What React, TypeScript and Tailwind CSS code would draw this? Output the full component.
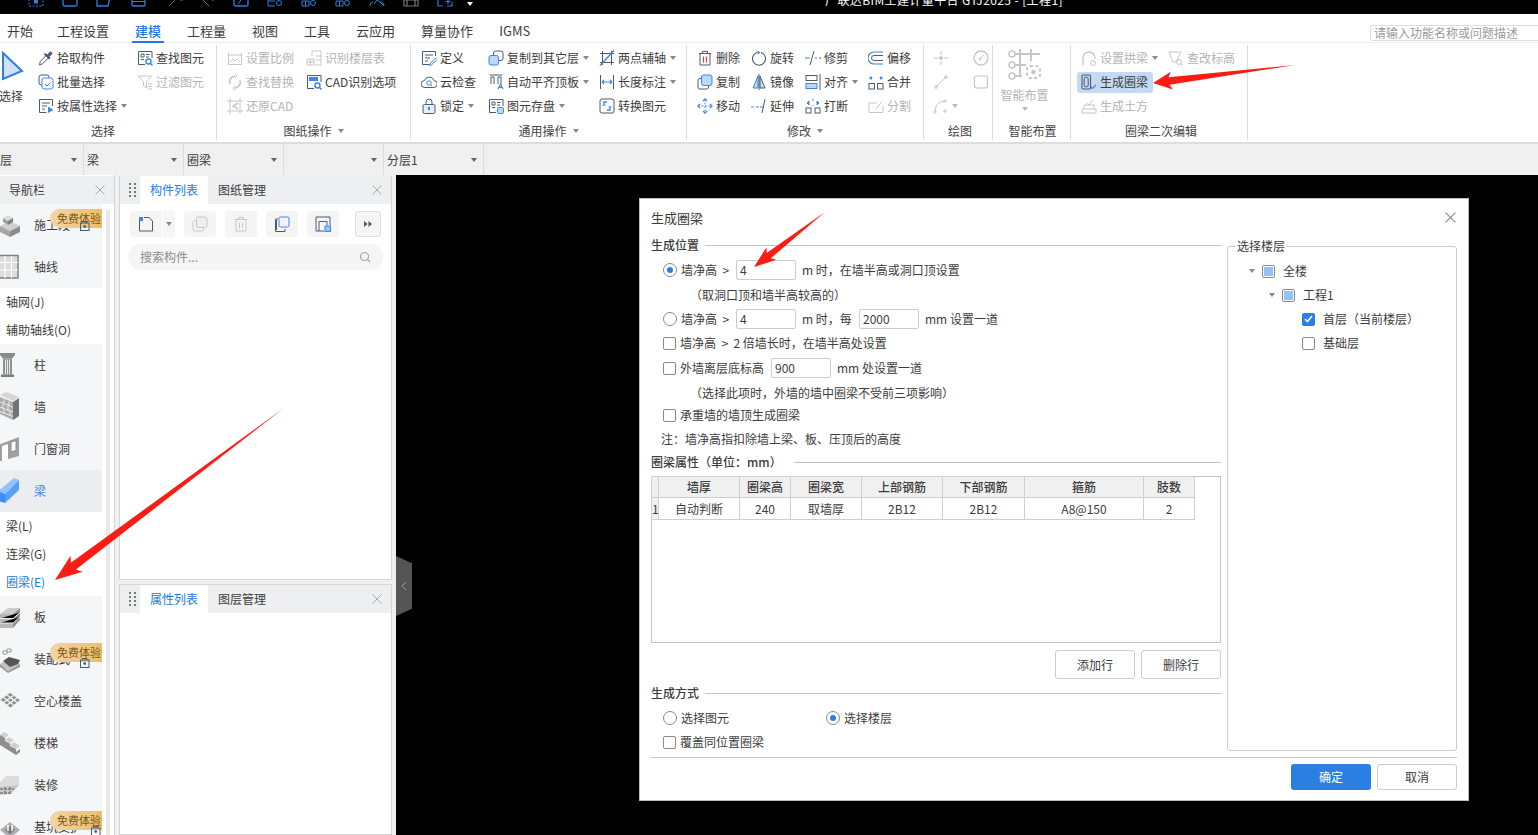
import type { ReactNode } from 'react';

const D = '#4a5b72';
const B = '#3d86e6';
const G = '#c6c6c6';

function Svg({ c = D, s = 16, v = 16, children }: { c?: string; s?: number; v?: number; children: ReactNode }) {
  return (
    <svg width={s} height={s} viewBox={`0 0 ${v} ${v}`} fill="none" stroke={c} strokeWidth="1" className="shrink-0">
      {children}
    </svg>
  );
}

function Caret({ c = 'border-t-[#888]' }: { c?: string }) {
  return <span className={`inline-block w-0 h-0 border-x-[3px] border-x-transparent border-t-[4px] ${c}`} />;
}

const icons: Record<string, ReactNode> = {
  pick: <Svg><path d="M1.500 15l.8-3.500L8 5.500l2.500 2.500-6 5.800z" fill="#fff" /><path d="M8 4l1.500 1L12 2.200c1-.8 2.600.8 1.800 1.800L11 6.500l1 1.500-1 1-5-5z" fill={D} /></Svg>,
  batch: <Svg><rect x="1" y="1" width="10" height="10" rx="2" /><rect x="4" y="4" width="11" height="11" rx="2.500" fill="#fff" stroke={B} /><path d="M7 10l2 2 3.500-3.500" stroke={B} /></Svg>,
  attr: <Svg><path d="M14.500 8V1.500h-13v13h7" /><path d="M4 5h8M4 8h5M4 11h3" /><path d="M10 8.500l5.500 3.500-5.500 3z" fill={B} stroke="none" /></Svg>,
  find: <Svg><path d="M15 8V1.500H1.500v13H8" /><path d="M4 4h3v3H4zM4 9.500h3M9 4.500h3.500M9 7h3" /><circle cx="11.500" cy="11.500" r="2.500" stroke={B} strokeWidth="1.400" /><path d="M13.500 13.500l2 2" stroke={B} strokeWidth="1.400" /></Svg>,
  filter: <Svg c={G}><path d="M1.500 2h13l-5 6v6l-3-2V8z" /><path d="M11 10h4M11 12.500h4M11 15h4" /></Svg>,
  scale: <Svg c={G}><path d="M1.500 3v2h13V3M1.500 14.500V5M14.500 14.500V5M1.500 14.500h13" /><path d="M3 12l3-3 2 2 2-2 3 3" /></Svg>,
  replace: <Svg c={G}><path d="M3 10A6 6 0 0 1 8 2M13 6a6 6 0 0 1-5 8" strokeWidth="1.600" /><path d="M8 0l2 2-2 2M8 12l-2 2 2 2" /></Svg>,
  restore: <Svg c={G}><path d="M3 0v16M0 3h16M13 0v16M0 13h16" /><path d="M11 5L6 8l5 3" strokeWidth="1.500" /></Svg>,
  floor: <Svg c={G}><path d="M6 1h9v14H9M6 1v5M10 6h5M10 10h5" /><path d="M1 15V9h7v6zM1 12h7M4.500 9v6" /></Svg>,
  cad: <Svg><path d="M15 8V1.500H1.500v13H8" /><rect x="3" y="3" width="9" height="4" fill={B} stroke="none" /><circle cx="11.500" cy="11.500" r="2.500" stroke={B} strokeWidth="1.400" /><path d="M13.500 13.500l2 2" stroke={B} strokeWidth="1.400" /></Svg>,
  define: <Svg><path d="M14.500 6V1.500h-13v13h7" /><path d="M4 5h8M4 8h5M4 11h3" /><path d="M9 14l5.500-6 1.500 1.500L10.500 15l-2 .5z" stroke={B} /></Svg>,
  cloud: <Svg><path d="M4 13.500a3.500 3.500 0 0 1-.5-7 5 5 0 0 1 9.500 0 3.500 3.500 0 0 1-.5 7z" /><circle cx="8" cy="9" r="2.200" stroke={B} /><path d="M9.500 10.500l1.500 1.500" stroke={B} /></Svg>,
  lock: <Svg><rect x="2" y="6.500" width="12" height="9" rx="1.500" fill="#e4eefc" /><path d="M5 6.500V4a3 3 0 0 1 6 0v2.500" /><path d="M8 9v3" stroke={B} strokeWidth="2" /></Svg>,
  copyFloor: <Svg><rect x="5.500" y="1" width="9.500" height="9.500" rx="2" /><rect x="1" y="5.500" width="9.500" height="9.500" rx="2" fill="#bcd7f9" stroke={B} /></Svg>,
  align: <Svg><path d="M1.500 1h13M3 10V3h3v7M10 10V3h3v7" /><path d="M10 15l2.500-5 2.500 5M11 13.500h3" stroke={B} strokeWidth="1.200" /></Svg>,
  save: <Svg><path d="M15 8V1.500H1.500v13H8" /><path d="M4 4h3v3H4zM4 9.500h3M9 4.500h3.500M9 7h3" /><rect x="9.500" y="9.500" width="6" height="6" rx="1" fill="#bcd7f9" stroke={B} /></Svg>,
  axis: <Svg c={B}><path d="M1 3.500h14M1 12.500h14M3.500 1v14M12.500 1v14" stroke={D} /><path d="M1 15.500L15 .5" strokeWidth="1.400" /></Svg>,
  dim: <Svg><path d="M1.500 1v14M14.500 1v14" /><path d="M3 8h10M3 8l2-2M3 8l2 2M13 8l-2-2M13 8l-2 2" stroke={B} strokeWidth="1.200" /></Svg>,
  convert: <Svg><rect x="1" y="1" width="14" height="14" rx="2" /><path d="M5 7V4h3M8 12h3V9" stroke={B} strokeWidth="1.300" /><path d="M3.500 8L5 6.500 6.500 8M9.500 8l1.500 1.500L12.500 8" stroke={B} /></Svg>,
  del: <Svg><path d="M2 3.500h12M5.500 3.500V1.500h5v2M3 3.500v11.500h10V3.500" /><path d="M6.500 6.500v6M9.500 6.500v6" stroke="#d9423a" strokeWidth="1.200" /></Svg>,
  copy: <Svg><rect x="1" y="4.500" width="10.500" height="10.500" rx="2" /><rect x="4.500" y="1" width="10.500" height="10.500" rx="2" fill="#bcd7f9" stroke={B} /></Svg>,
  move: <Svg c={B}><path d="M8 1v14M1 8h14" strokeDasharray="2 1.500" /><path d="M6 3l2-2 2 2M6 13l2 2 2-2M3 6L1 8l2 2M13 6l2 2-2 2" strokeWidth="1.300" /></Svg>,
  rotate: <Svg><path d="M10 2.500a6.500 6.500 0 1 1-4 0" strokeWidth="1.100" /><path d="M6.500 .5l3 2-3 2z" fill={B} stroke="none" /></Svg>,
  mirror: <Svg><path d="M7 2L2 14h5z" fill="#bcd7f9" stroke={B} /><path d="M9 2l5 12H9z" fill="#d5dbe3" /><path d="M8 0v16" /></Svg>,
  extend: <Svg><path d="M0 9h3M5 9h3" stroke={B} /><path d="M9 9h4" stroke={B} /><path d="M11 15L14 1" /></Svg>,
  trim: <Svg><path d="M0 8h5" stroke={B} /><path d="M10 8h2M14 8h2" /><path d="M5 15L9 1" /></Svg>,
  alignTo: <Svg><rect x="1" y="1.500" width="11" height="5" /><rect x="1" y="9.500" width="11" height="5" fill="#bcd7f9" stroke={B} /><path d="M15 0v16" /></Svg>,
  cut: <Svg><rect x="1" y="10" width="5" height="5" /><rect x="10" y="10" width="5" height="5" /><path d="M2 5l2-2v4zM14 5l-2-2v4z" fill={B} stroke={B} /><path d="M8 7v1M8 1v2" stroke={B} /></Svg>,
  offset: <Svg c={B}><path d="M15 2H6a6 6 0 0 0 0 12h9" strokeWidth="1.200" /><path d="M15 5.500H6a2.500 2.500 0 0 0 0 5h9" stroke={D} /></Svg>,
  merge: <Svg><rect x="1" y="9.500" width="5.500" height="5.500" /><rect x="9.500" y="9.500" width="5.500" height="5.500" /><path d="M1 4h3M4 4L2.500 2.500M4 4L2.500 5.500M15 4h-3M12 4l1.500-1.500M12 4l1.500 1.500" stroke={B} strokeWidth="1.200" /></Svg>,
  split: <Svg c={G}><path d="M15 8v6.500H1V5h8" /><path d="M8 11l6-7.500" /></Svg>,
  p1: <Svg c={G}><path d="M8 1v4M8 11v4M1 8h4M11 8h4" /><circle cx="8" cy="8" r="1.500" fill={G} /></Svg>,
  p2: <Svg c={G}><circle cx="8" cy="8" r="7" strokeWidth="1.300" /><path d="M7 9l4-4" /><circle cx="7" cy="9" r="1" /></Svg>,
  p3: <Svg c={G}><path d="M3 13L13 3" /><circle cx="3" cy="13" r="1.300" /><circle cx="13" cy="3" r="1.300" /></Svg>,
  p4: <Svg c={G}><rect x="1.500" y="2" width="13" height="12" rx="2" strokeWidth="1.200" /></Svg>,
  p5: <Svg c={G}><path d="M2 14A10 10 0 0 1 11 3" /><circle cx="2" cy="14" r="1.200" /><circle cx="12" cy="3" r="1.200" /><circle cx="12" cy="13" r="1.200" /></Svg>,
  arch: <Svg c={G}><path d="M2 15V8a6 6 0 0 1 12 0v1" strokeWidth="1.300" /><circle cx="12" cy="13" r="2.500" /></Svg>,
  elev: <Svg c={G}><path d="M1 2h12L8 12H5z" /><circle cx="11" cy="12" r="2.500" /><path d="M13 14l2 1.500" /></Svg>,
  ring: <Svg><rect x="1" y="1" width="8.500" height="14" rx="1" strokeWidth="1.100" /><rect x="3.200" y="3" width="4" height="10" rx="2" /><path d="M10 13l1.500 1.500L15 11" stroke={B} strokeWidth="1.200" /></Svg>,
  earth: <Svg c={G}><path d="M1 11h14v4H1zM3 11V7h10v4" /><path d="M6 5l2 2 4-5" /></Svg>,
};

function Item({ icon, label, off, caret, className = '' }: { icon: string; label: string; off?: boolean; caret?: boolean; className?: string }) {
  return (
    <div className={`flex items-center h-[24px] whitespace-nowrap ${off ? 'text-[#b4b4b4]' : 'text-[#3c3c3c]'} ${className}`}>
      {icons[icon]}
      <span className="ml-[3px]">{label}</span>
      {caret && <span className="ml-[4px] flex"><Caret /></span>}
    </div>
  );
}

function Group({ label, caret, w, pl, labelClass = '', children }: { label: string; caret?: boolean; w: string; pl: string; labelClass?: string; children: ReactNode }) {
  return (
    <div className={`${w} shrink-0 h-[95px] mt-[2px] border-r border-[#dcdcdc] flex flex-col`}>
      <div className={`flex h-[73px] pt-[1px] ${pl}`}>{children}</div>
      <div className={`flex items-center justify-center gap-[6px] pt-[4px] text-[#444] ${labelClass}`}>
        {label}
        {caret && <Caret />}
      </div>
    </div>
  );
}

const tabs = ['开始', '工程设置', '建模', '工程量', '视图', '工具', '云应用', '算量协作', 'IGMS'];

const topIcons: { m: string; c: string; node: ReactNode }[] = [
  { m: 'ml-[28px]', c: '#2f7fe0', node: <><path d="M1 1v14h14V1" strokeDasharray="2 1.500" /><rect x="6.500" y="8" width="3" height="4" fill="#2f7fe0" /></> },
  { m: 'ml-[18px]', c: '#2f7fe0', node: <rect x="1" y="1" width="14" height="14" rx="1.500" strokeWidth="1.300" /> },
  { m: 'ml-[18px]', c: '#2f7fe0', node: <path d="M1 1v14h11l3-14" strokeWidth="1.300" /> },
  { m: 'ml-[19px]', c: '#2f7fe0', node: <><rect x="1" y="1" width="13" height="14" rx="1" strokeWidth="1.300" /><path d="M1 10.500h13" /></> },
  { m: 'ml-[21px]', c: '#666', node: <path d="M1 15L11 5M12 9h3" /> },
  { m: 'ml-[14px]', c: '#666', node: <path d="M1 5l10 10M14 9h2" /> },
  { m: 'ml-[19px]', c: '#2f7fe0', node: <><rect x="1" y="1" width="14" height="14" rx="1.500" strokeWidth="1.300" /><path d="M5 13l5-7" /></> },
  { m: 'ml-[18px]', c: '#2f7fe0', node: <><path d="M1 1v14h7M1 10h7" /><circle cx="12" cy="12" r="2.500" /></> },
  { m: 'ml-[18px]', c: '#2f7fe0', node: <><path d="M1 10h7v5H1zM4.500 10v5" /><circle cx="12" cy="12" r="2.500" /></> },
  { m: 'ml-[18px]', c: '#2f7fe0', node: <><path d="M1 10h7v5H1zM4.500 10v5" /><circle cx="12" cy="12" r="2.500" /></> },
  { m: 'ml-[18px]', c: '#2f7fe0', node: <><path d="M1 15c0-3 2-4 3-4M11 11c2 0 4 1 4 4z" /><path d="M5 13l3-4 3 2" /></> },
  { m: 'ml-[18px]', c: '#777', node: <path d="M1 9h14v6H1zM4 9v6M12 9v6" strokeWidth="1.200" /> },
  { m: 'ml-[18px]', c: '#2f7fe0', node: <path d="M1 1v14h5M10 15h5v-4M11 8v5M8.500 10.500h5" strokeWidth="1.200" /> },
];

function TopBar() {
  return (
    <div className="h-[14px] bg-black flex overflow-hidden relative shrink-0">
      {topIcons.map((t, i) => (
        <div key={i} className={`${t.m} -mt-[9px] w-[16px] h-[16px] shrink-0`}>
          <Svg c={t.c}>{t.node}</Svg>
        </div>
      ))}
      <span className="ml-[14px] mt-[2px] w-0 h-0 border-x-[3px] border-x-transparent border-t-[4px] border-t-white" />
      <span className="absolute left-[825px] -top-[9px] text-white text-[12px] tracking-[0.4px] whitespace-nowrap">广联达BIM土建计量平台 GTJ2025 - [工程1]</span>
    </div>
  );
}

function MenuTabs() {
  return (
    <div className="h-[29px] shrink-0 flex border-b border-[#eeeeee] pl-[7px] text-[13px] gap-[26px] relative">
      {tabs.map((t, i) => (
        <div key={t} className={`relative pt-[7px] leading-[20px] ${i === 1 ? '-ml-[2px]' : ''} ${t === '建模' ? 'text-[#1b7ae8] font-medium' : 'text-[#3c3c3c]'}`}>
          {t}
          {t === '建模' && <span className="absolute -left-[3px] -right-[3px] top-[27px] h-[2px] bg-[#1b7ae8]" />}
        </div>
      ))}
      <div className="absolute left-[1370px] top-[11px] w-[180px] h-[16px] border border-[#dddddd] rounded-[2px] text-[12px] leading-[14px] pl-[3px] text-[#9a9a9a]">请输入功能名称或问题描述</div>
    </div>
  );
}

function Ribbon() {
  return (
    <div className="h-[101px] shrink-0 flex border-b-2 border-[#dddddd] text-[12px] bg-white">
      <Group label="选择" w="w-[217px]" pl="pl-0" labelClass="pr-[10px]">
        <div className="w-[38px] shrink-0 flex flex-col">
          <svg width="24" height="30" viewBox="0 0 24 30" className="ml-[1px] mt-[5px]">
            <path d="M2 2l19 18-19 8z" fill="#cfe2fb" stroke="#2f7fe0" strokeWidth="2" />
          </svg>
          <span className="mt-[6px] -ml-[1px] text-[#3c3c3c]">选择</span>
        </div>
        <div className="w-[99px] shrink-0">
          <Item icon="pick" label="拾取构件" />
          <Item icon="batch" label="批量选择" />
          <Item icon="attr" label="按属性选择" caret />
        </div>
        <div>
          <Item icon="find" label="查找图元" />
          <Item icon="filter" label="过滤图元" off />
        </div>
      </Group>
      <Group label="图纸操作" caret w="w-[194px]" pl="pl-[10px]">
        <div className="w-[79px] shrink-0">
          <Item icon="scale" label="设置比例" off />
          <Item icon="replace" label="查找替换" off />
          <Item icon="restore" label="还原CAD" off />
        </div>
        <div>
          <Item icon="floor" label="识别楼层表" off />
          <Item icon="cad" label="CAD识别选项" />
        </div>
      </Group>
      <Group label="通用操作" caret w="w-[276px]" pl="pl-[10px]">
        <div className="w-[67px] shrink-0">
          <Item icon="define" label="定义" />
          <Item icon="cloud" label="云检查" />
          <Item icon="lock" label="锁定" caret />
        </div>
        <div className="w-[111px] shrink-0">
          <Item icon="copyFloor" label="复制到其它层" caret />
          <Item icon="align" label="自动平齐顶板" caret />
          <Item icon="save" label="图元存盘" caret />
        </div>
        <div>
          <Item icon="axis" label="两点辅轴" caret />
          <Item icon="dim" label="长度标注" caret />
          <Item icon="convert" label="转换图元" />
        </div>
      </Group>
      <Group label="修改" caret w="w-[237px]" pl="pl-[10px]">
        <div className="w-[54px] shrink-0">
          <Item icon="del" label="删除" />
          <Item icon="copy" label="复制" />
          <Item icon="move" label="移动" />
        </div>
        <div className="w-[54px] shrink-0">
          <Item icon="rotate" label="旋转" />
          <Item icon="mirror" label="镜像" />
          <Item icon="extend" label="延伸" />
        </div>
        <div className="w-[63px] shrink-0">
          <Item icon="trim" label="修剪" />
          <Item icon="alignTo" label="对齐" caret />
          <Item icon="cut" label="打断" />
        </div>
        <div>
          <Item icon="offset" label="偏移" />
          <Item icon="merge" label="合并" />
          <Item icon="split" label="分割" off />
        </div>
      </Group>
      <Group label="绘图" w="w-[69px]" pl="pl-[9px]" labelClass="pl-[4px]">
        <div className="w-[40px] shrink-0">
          <Item icon="p1" label="" />
          <Item icon="p3" label="" />
          <div className="flex items-center gap-[3px] h-[24px]">{icons.p5}<Caret c="border-t-[#bbb]" /></div>
        </div>
        <div>
          <Item icon="p2" label="" />
          <Item icon="p4" label="" />
        </div>
      </Group>
      <Group label="智能布置" w="w-[78px]" pl="pl-0" labelClass="pl-[2px]">
        <div className="w-full flex flex-col items-center text-[#b4b4b4] pr-[14px]">
          <svg width="34" height="34" viewBox="0 0 34 34" fill="none" stroke="#c6c6c6" strokeWidth="1.500" className="mt-[2px]">
            <path d="M4 6h28M4 17h14M4 28h10M12 1v28M23 1v12" strokeWidth="2" />
            <circle cx="4" cy="6" r="3" fill="#fff" />
            <circle cx="4" cy="17" r="3" fill="#fff" />
            <circle cx="4" cy="28" r="3" fill="#fff" />
            <rect x="19" y="18" width="13" height="12" rx="3" strokeWidth="2" strokeDasharray="3 2.500" />
            <circle cx="25.500" cy="24" r="1.500" fill="#c6c6c6" />
          </svg>
          <span className="mt-[4px] whitespace-nowrap">智能布置</span>
          <span className="mt-[3px] flex"><Caret c="border-t-[#bbb]" /></span>
        </div>
      </Group>
      <Group label="圈梁二次编辑" w="w-[177px]" pl="pl-[10px]" labelClass="pl-[4px]">
        <div className="w-[87px] shrink-0">
          <Item icon="arch" label="设置拱梁" off caret />
          <Item icon="ring" label="生成圈梁" className="bg-[#c3daf2] rounded-[3px] -ml-[4px] pl-[4px] w-[76px] !h-[21px] my-[1.500px]" />
          <Item icon="earth" label="生成土方" off />
        </div>
        <div>
          <Item icon="elev" label="查改标高" off />
        </div>
      </Group>
    </div>
  );
}

function ComboBar() {
  const cells = [
    { t: '层', w: 'w-[84px]', pl: 'pl-0' },
    { t: '梁', w: 'w-[100px]', pl: 'pl-[3px]' },
    { t: '圈梁', w: 'w-[100px]', pl: 'pl-[3px]' },
    { t: '', w: 'w-[100px]', pl: 'pl-[3px]' },
    { t: '分层1', w: 'w-[100px]', pl: 'pl-[3px]' },
  ];
  return (
    <div className="h-[31px] shrink-0 flex bg-[#f0f0f0] text-[12px] text-[#3c3c3c]">
      {cells.map((c, i) => (
        <div key={i} className={`${c.w} ${c.pl} flex items-center justify-between pr-[6px] border-r border-[#dcdcdc]`}>
          <span>{c.t}</span>
          <Caret c="border-t-[#666]" />
        </div>
      ))}
    </div>
  );
}

function X({ c = '#a8a8a8', s = 10 }: { c?: string; s?: number }) {
  return (
    <svg width={s} height={s} viewBox="0 0 10 10" stroke={c} strokeWidth="1" className="shrink-0">
      <path d="M.5.5l9 9M9.500.5l-9 9" />
    </svg>
  );
}

// drawn around y=11, the middle of a nav row
const navIcons: Record<string, ReactNode> = {
  seg: <g><path d="M0 12l10-5 10 5-10 5z" fill="#cfcfcf" /><path d="M0 12l10 5v6l-10-5z" fill="#a6a6a6" /><path d="M20 12l-10 5v6l10-5z" fill="#8c8c8c" /><path d="M3 4l5-3 5 3-5 3z" fill="#dadada" /><path d="M3 4l5 3v4l-5-3z" fill="#9e9e9e" /><path d="M13 4l-5 3v4l5-3z" fill="#808080" /></g>,
  axis: <g><rect x="-2" y="-.5" width="20" height="22.500" fill="#dddddd" stroke="#808080" strokeWidth="1.500" /><path d="M5 0v22M11.500 0v22M-2 6.500h20M-2 14h20" stroke="#fff" strokeWidth="1.200" /></g>,
  col: <g><path d="M0-1h15v2l-3 3.500H3L0 1z" fill="#8a8a8a" /><rect x="3" y="4.500" width="9" height="16" fill="#8f8f8f" /><path d="M5.500 5.500v15M7.500 5.500v15M9.500 5.500v15" stroke="#ececec" /><path d="M1 20.500h13v2.500H1z" fill="#7a7a7a" /></g>,
  wall: <g><path d="M0-1l13 6 6-4-13-5z" fill="#d6d6d6" /><path d="M0 1l13 5v18L0 18z" fill="#ababab" /><path d="M13 6l6-4v18l-6 4z" fill="#737373" /><path d="M0 6l13 5M0 11l13 5M0 15.500l13 5M4 3v5M9 5v5M3 8v5M8 10v5M4 13v5M10 15v5" stroke="#e8e8e8" /></g>,
  door: <g><path d="M-2 7L19-1v19L8 21V23H-2z" fill="#a0a0a0" /><path d="M2 8l6-2v17H2z" fill="#fff" /><path d="M11 4l5-1.500v10L11 14z" fill="#fff" stroke="#8a8a8a" /></g>,
  beam: <g><path d="M-2 11L14-2l5 2L5 14z" fill="#93c3ff" /><path d="M5 14L19 0v10L5 23z" fill="#5a9ff7" /><path d="M-2 11l7 3v9l-7-2z" fill="#3e8bf5" /></g>,
  slab: <g><path d="M0 8h13l7-6H8z" fill="#cccccc" /><path d="M0 8h13v14H0z" fill="#b8b8b8" /><path d="M13 8l7-6v12l-7 8z" fill="#8f8f8f" /><path d="M0 12.500h13l7-6M0 17h13l7-6" stroke="#efefef" /></g>,
  fab: <g><path d="M0 16l8-5 12 5-12 7z" fill="#c2c2c2" /><path d="M8 23l12-7v3L8 25zM0 16l8 7v2l-8-6z" fill="#999" /><path d="M3 13l6-4 11 3-2 4-8 3z" fill="#555" /><path d="M3 3h4v3H3zM7 1h4v3H7z" fill="#fff" stroke="#999" /></g>,
  hollow: <g><path d="M0 10l10-7 10 7-10 8z" fill="#8e8e8e" /><path d="M3.500 7.500l10 7.500M7 5l10 7.500M13.500 5.500L3 13M17 8L6.500 15.500M0 10l10 8" stroke="#f5f6f8" strokeWidth="1.300" /></g>,
  stair: <g><path d="M0 3l4-3 5 3-4 3zM5 8l4-3 5 3-4 3zM10 13l4-3 6 4-4 3z" fill="#d0d0d0" /><path d="M0 3l5 3v3l5 2.500V14l6 3v3l4-3v3l-4 3L0 13z" fill="#8f8f8f" /></g>,
  deco: <g><path d="M0 8l6-6h13v9L10 16H0z" fill="#dcdcdc" /><path d="M0 13l10-1 9-1-8 9-11 1z" fill="#c8c8c8" /><path d="M0 15h14M0 19h10M5 13v7M10 13v7" stroke="#7f7f7f" strokeWidth="1.500" strokeDasharray="3 1" /></g>,
  pit: <g><path d="M0 14l10-8 10 8-10 8z" fill="#b0b0b0" /><path d="M5 14l5-4 5 4-5 4z" fill="#777" /><path d="M8 9v6M12 9v6" stroke="#fff" strokeWidth="1.500" /></g>,
};

function Lock({ className }: { className: string }) {
  return (
    <svg width="10" height="11" viewBox="0 0 10 11" fill="none" stroke="#4a5b72" className={`absolute ${className}`}>
      <rect x=".5" y="3" width="8.500" height="7.500" />
      <path d="M2.500 3V1.500h4.500V3" />
      <circle cx="4.700" cy="6.500" r="1" fill="#4a5b72" />
    </svg>
  );
}

function NavRow({ icon, label, badge, active, lockClass }: { icon: string; label: string; badge?: boolean; active?: boolean; lockClass?: string }) {
  return (
    <div className={`relative h-[42px] flex items-center ${active ? 'bg-[#ecedf1]' : 'bg-[#f5f6f8]'}`}>
      <svg width="22" height="30" viewBox="-2 -4 22 30" className="shrink-0 -ml-[2px]">
        {navIcons[icon]}
      </svg>
      <span className={`ml-[14px] whitespace-nowrap ${active ? 'text-[#3d86e6]' : 'text-[#3c3c3c]'}`}>{label}</span>
      {badge && (
        <>
          <span className="absolute right-0 top-[5px] w-[52px] h-[19px] rounded-l-full bg-gradient-to-r from-[#f3d5a3] to-[#edbd68] text-[#7c5516] text-[11px] leading-[19px] pl-[7px] whitespace-nowrap overflow-hidden">免费体验</span>
          <Lock className={lockClass ?? 'left-[80px] top-[16px]'} />
        </>
      )}
    </div>
  );
}

function SubRow({ label, active }: { label: string; active?: boolean }) {
  return <div className={`h-[28px] pl-[6px] flex items-center bg-white ${active ? 'text-[#1b7ae8]' : 'text-[#3c3c3c]'}`}>{label}</div>;
}

function NavPanel() {
  return (
    <div className="w-[115px] shrink-0 h-full border-r border-[#d5d5d5] bg-white flex flex-col text-[12px] overflow-hidden">
      <div className="h-[28px] mt-[1px] shrink-0 bg-[#eeeff1] flex items-center justify-between pl-[9px] pr-[9px] text-[#3c3c3c]">
        导航栏
        <X />
      </div>
      <div className="flex flex-1 min-h-0">
        <div className="w-[102px] shrink-0">
          <NavRow icon="seg" label="施工段" badge />
          <NavRow icon="axis" label="轴线" />
          <SubRow label="轴网(J)" />
          <SubRow label="辅助轴线(O)" />
          <NavRow icon="col" label="柱" />
          <NavRow icon="wall" label="墙" />
          <NavRow icon="door" label="门窗洞" />
          <NavRow icon="beam" label="梁" active />
          <SubRow label="梁(L)" />
          <SubRow label="连梁(G)" />
          <SubRow label="圈梁(E)" active />
          <NavRow icon="slab" label="板" />
          <NavRow icon="fab" label="装配式" badge lockClass="left-[80px] top-[19px]" />
          <NavRow icon="hollow" label="空心楼盖" />
          <NavRow icon="stair" label="楼梯" />
          <NavRow icon="deco" label="装修" />
          <NavRow icon="pit" label="基坑支护" badge lockClass="left-[91px] top-[19px]" />
        </div>
        <div className="w-[4px] ml-[4px] mt-[6px] bg-[#e8e8e8]" />
      </div>
    </div>
  );
}

function PanelHeader({ tabs: t }: { tabs: [string, string] }) {
  return (
    <div className="h-[28px] shrink-0 bg-[#eeeff1] flex items-center text-[12px]">
      <div className="w-[20px] flex justify-center pl-[4px]">
        <div className="grid grid-cols-2 gap-x-[3px] gap-y-[2px]">
          {[0, 1, 2, 3, 4, 5, 6, 7].map((i) => (
            <span key={i} className="w-[2px] h-[2px] bg-[#777]" />
          ))}
        </div>
      </div>
      <div className="w-[68px] h-full bg-white text-[#1b7ae8] flex items-center justify-center">{t[0]}</div>
      <div className="ml-[10px] text-[#3c3c3c]">{t[1]}</div>
      <div className="ml-auto mr-[9px]"><X /></div>
    </div>
  );
}

function ToolBtn({ className = '', children }: { className?: string; children: ReactNode }) {
  return <div className={`h-[26px] bg-[#f5f5f5] rounded-[3px] flex items-center justify-center shrink-0 ${className}`}>{children}</div>;
}

function ListPanel() {
  return (
    <div className="h-[404px] shrink-0 border border-t-0 border-[#d5d5d5] bg-white flex flex-col">
      <PanelHeader tabs={['构件列表', '图纸管理']} />
      <div className="flex items-center pl-[10px] mt-[7px]">
        <ToolBtn className="w-[32px] rounded-r-none">
          <Svg>
            <path d="M1.500 5v10h13V5L11 1.500H6" />
            <rect x="1" y="1" width="4" height="4" fill="#3d86e6" stroke="none" />
          </Svg>
        </ToolBtn>
        <ToolBtn className="w-[12px] ml-[1px] rounded-l-none"><Caret /></ToolBtn>
        <ToolBtn className="w-[32px] ml-[9px]">
          <Svg c={G}><rect x="1" y="4.500" width="10.500" height="10.500" rx="1.500" /><rect x="4.500" y="1" width="10.500" height="10.500" rx="1.500" fill="#eee" /></Svg>
        </ToolBtn>
        <ToolBtn className="w-[32px] ml-[9px]">
          <Svg c={G}><path d="M2 3.500h12M5.500 3.500V1.500h5v2M3 3.500v11.500h10V3.500M6.500 6.500v6M9.500 6.500v6" /></Svg>
        </ToolBtn>
        <ToolBtn className="w-[32px] ml-[9px]">
          <Svg><path d="M4 3H1.500v12.500H11V13" /><path d="M2.500 4v10" /><rect x="5" y="1" width="10" height="10" rx="1.500" stroke="#3d86e6" /></Svg>
        </ToolBtn>
        <ToolBtn className="w-[32px] ml-[9px]">
          <Svg><path d="M15 9V1H1v14h8" /><path d="M4 5.500h8M4 5.500V15M12 5.500v4" /><rect x="10" y="10" width="5.500" height="5.500" fill="#9dc3f4" stroke="#3d86e6" /></Svg>
        </ToolBtn>
        <div className="w-[26px] h-[26px] ml-[16px] border border-[#dedede] rounded-[3px] bg-[#f5f5f5] flex items-center justify-center">
          <svg width="8" height="6" viewBox="0 0 8 6" fill="#555"><path d="M0 0l3.500 3L0 6zM4.500 0L8 3 4.500 6z" /></svg>
        </div>
      </div>
      <div className="mx-[8px] mt-[7px] h-[26px] rounded-full bg-[#f5f5f5] flex items-center justify-between px-[12px] text-[12px] text-[#8c8c8c]">
        搜索构件...
        <svg width="12" height="12" viewBox="0 0 12 12" fill="none" stroke="#aaa" strokeWidth="1.200"><circle cx="5.500" cy="5.500" r="4" /><path d="M8.500 8.500l2.500 2.500" /></svg>
      </div>
    </div>
  );
}

function Radio({ on }: { on?: boolean }) {
  return (
    <span className="w-[14px] h-[14px] rounded-full border border-[#8a8a8a] bg-white flex items-center justify-center shrink-0">
      {on && <span className="w-[6px] h-[6px] rounded-full bg-[#2b7fe3]" />}
    </span>
  );
}

function Check() {
  return <span className="w-[13px] h-[13px] rounded-[2px] border border-[#8a8a8a] bg-white shrink-0" />;
}

function Field({ value, className = '' }: { value: string; className?: string }) {
  return <span className={`w-[60px] h-[20px] border border-[#cccccc] rounded-[2px] pl-[3px] leading-[18px] shrink-0 ${className}`}>{value}</span>;
}

function Heading({ label, gap = 'gap-[6px]' }: { label: string; gap?: string }) {
  return (
    <div className={`h-[18px] flex items-center whitespace-nowrap ${gap}`}>
      <span className="font-medium">{label}</span>
      <span className="flex-1 h-px bg-[#c4c4c4]" />
    </div>
  );
}

const colW = ['w-[7px]', 'w-[81px]', 'w-[51px]', 'w-[71px]', 'w-[81px]', 'w-[82px]', 'w-[119px]', 'w-[51px]'];
const heads = ['', '墙厚', '圈梁高', '圈梁宽', '上部钢筋', '下部钢筋', '箍筋', '肢数'];
const cells = ['1', '自动判断', '240', '取墙厚', '2B12', '2B12', 'A8@150', '2'];

function PropTable() {
  return (
    <div className="h-[167px] mt-[5px] border border-[#c4c4c4]">
      <table className="table-fixed w-[543px] border-collapse text-center text-[12px] -mt-px -ml-px">
        <colgroup>
          {colW.map((w, i) => <col key={i} className={w} />)}
        </colgroup>
        <thead>
          <tr className="h-[21px] bg-[#f0f0f0]">
            {heads.map((h, i) => <th key={i} className="border border-[#cfcfcf] font-medium p-0">{h}</th>)}
          </tr>
        </thead>
        <tbody>
          <tr className="h-[22px]">
            {cells.map((c, i) => <td key={i} className={`border border-[#cfcfcf] p-0 font-normal ${i === 0 ? 'bg-[#f0f0f0]' : ''}`}>{c}</td>)}
          </tr>
        </tbody>
      </table>
    </div>
  );
}

function TreeBox({ level, checked, mixed }: { level: string; checked?: boolean; mixed?: boolean }) {
  if (checked) {
    return (
      <span className={`${level} w-[13px] h-[13px] rounded-[2px] bg-[#2b7fe3] flex items-center justify-center shrink-0`}>
        <svg width="9" height="8" viewBox="0 0 9 8" fill="none" stroke="#fff" strokeWidth="1.600"><path d="M1 4l2.500 2.500L8 1" /></svg>
      </span>
    );
  }
  return (
    <span className={`${level} w-[13px] h-[13px] rounded-[2px] border border-[#8a8a8a] bg-white flex items-center justify-center shrink-0`}>
      {mixed && <span className="w-[9px] h-[9px] bg-[#93c2f7]" />}
    </span>
  );
}

function Dialog() {
  return (
    <div className="absolute left-[243px] top-[23px] w-[830px] h-[603px] bg-white border border-[#bdbdbd] text-[12px] text-[#3c3c3c] flex flex-col px-[11px]">
      <div className="h-[37px] shrink-0 flex items-center justify-between pr-[1px] text-[13px]">
        生成圈梁
        <X c="#8a8a8a" s={11} />
      </div>
      <div className="flex h-[521px] shrink-0">
        <div className="w-[570px] shrink-0 flex flex-col">
          <Heading label="生成位置" />
          <div className="mt-[4px] h-[24px] flex items-center pl-[12px] whitespace-nowrap">
            <Radio on />
            <span className="ml-[4px] w-[55px]">墙净高 &nbsp;&gt;</span>
            <Field value="4" />
            <span className="ml-[6px]">m 时，在墙半高或洞口顶设置</span>
          </div>
          <div className="mt-px h-[24px] flex items-center pl-[39px]">（取洞口顶和墙半高较高的）</div>
          <div className="h-[24px] flex items-center pl-[12px] whitespace-nowrap">
            <Radio />
            <span className="ml-[4px] w-[55px]">墙净高 &nbsp;&gt;</span>
            <Field value="4" />
            <span className="ml-[6px] w-[57px]">m 时，每</span>
            <Field value="2000" />
            <span className="ml-[6px]">mm 设置一道</span>
          </div>
          <div className="h-[24px] flex items-center pl-[12px] gap-[4px] whitespace-nowrap">
            <Check />
            <span>墙净高 &nbsp;&gt; &nbsp;2 倍墙长时，在墙半高处设置</span>
          </div>
          <div className="mt-px h-[24px] flex items-center pl-[12px] whitespace-nowrap">
            <Check />
            <span className="ml-[4px] w-[91px]">外墙离层底标高</span>
            <Field value="900" />
            <span className="ml-[6px]">mm 处设置一道</span>
          </div>
          <div className="mt-[2px] h-[22px] flex items-center pl-[39px]">（选择此项时，外墙的墙中圈梁不受前三项影响）</div>
          <div className="h-[22px] flex items-center pl-[12px] gap-[4px]">
            <Check />
            承重墙的墙顶生成圈梁
          </div>
          <div className="mt-[2px] h-[22px] flex items-center pl-[10px]">注：墙净高指扣除墙上梁、板、压顶后的高度</div>
          <div className="mt-[3px]"><Heading label="圈梁属性（单位：mm）" gap="gap-[12px]" /></div>
          <PropTable />
          <div className="flex justify-end gap-[6px] mt-[7px]">
            <div className="w-[80px] h-[29px] border border-[#cccccc] rounded-[3px] flex items-center justify-center">添加行</div>
            <div className="w-[80px] h-[29px] border border-[#cccccc] rounded-[3px] flex items-center justify-center">删除行</div>
          </div>
          <div className="mt-[5px]"><Heading label="生成方式" /></div>
          <div className="mt-[5px] h-[22px] flex items-center pl-[12px]">
            <Radio />
            <span className="ml-[4px] w-[145px]">选择图元</span>
            <Radio on />
            <span className="ml-[4px]">选择楼层</span>
          </div>
          <div className="mt-[2px] h-[22px] flex items-center pl-[12px] gap-[4px]">
            <Check />
            覆盖同位置圈梁
          </div>
        </div>
        <div className="relative ml-[6px] w-[230px] h-[505px] mt-[10px] border border-[#cccccc] rounded-[3px]">
          <span className="absolute left-[8px] -top-[9px] bg-white px-px leading-[16px]">选择楼层</span>
          <div className="pt-[12px] flex flex-col">
            <div className="h-[24px] flex items-center pl-[21px]">
              <Caret c="border-t-[#888]" />
              <TreeBox level="ml-[7px]" mixed />
              <span className="ml-[8px]">全楼</span>
            </div>
            <div className="h-[24px] flex items-center pl-[41px]">
              <Caret c="border-t-[#888]" />
              <TreeBox level="ml-[7px]" mixed />
              <span className="ml-[8px]">工程1</span>
            </div>
            <div className="h-[24px] flex items-center pl-[74px]">
              <TreeBox level="" checked />
              <span className="ml-[8px]">首层（当前楼层）</span>
            </div>
            <div className="h-[24px] flex items-center pl-[74px]">
              <TreeBox level="" />
              <span className="ml-[8px]">基础层</span>
            </div>
          </div>
        </div>
      </div>
      <div className="h-px bg-[#c9c9c9] shrink-0" />
      <div className="flex justify-end gap-[6px] mt-[6px]">
        <div className="w-[80px] h-[26px] rounded-[3px] bg-[#2b7fe3] text-white flex items-center justify-center">确定</div>
        <div className="w-[80px] h-[26px] rounded-[3px] border border-[#cccccc] flex items-center justify-center">取消</div>
      </div>
    </div>
  );
}

const arrows = [
  { tip: [55, 580], tail: [284, 408], hl: 27, w: 10 },
  { tip: [754, 267], tail: [825, 212], hl: 22, w: 8 },
  { tip: [1153, 83], tail: [1295, 65], hl: 19, w: 9 },
];

function arrowPoints(a: (typeof arrows)[number]) {
  const dx = a.tail[0] - a.tip[0];
  const dy = a.tail[1] - a.tip[1];
  const len = Math.hypot(dx, dy);
  const ux = dx / len;
  const uy = dy / len;
  const at = (along: number, side: number) => `${a.tip[0] + ux * along - uy * side},${a.tip[1] + uy * along + ux * side}`;
  return [at(0, 0), at(a.hl, a.w), at(a.hl * 0.85, a.w * 0.42), `${a.tail[0]},${a.tail[1]}`, at(a.hl * 0.85, -a.w * 0.42), at(a.hl, -a.w)].join(' ');
}

export default function App() {
  return (
    <div className="relative w-[1538px] h-[835px] overflow-hidden bg-white flex flex-col [text-spacing-trim:space-all] font-['Noto_Sans_CJK_SC','Liberation_Sans',sans-serif]">
      <TopBar />
      <MenuTabs />
      <Ribbon />
      <ComboBar />
      <div className="flex flex-1 min-h-0 bg-[#f0f0f0]">
        <NavPanel />
        <div className="w-[273px] ml-[4px] shrink-0 flex flex-col pt-px">
          <ListPanel />
          <div className="flex-1 mt-[4px] border border-[#d5d5d5] bg-white">
            <PanelHeader tabs={['属性列表', '图层管理']} />
          </div>
        </div>
        <div className="relative flex-1 ml-[4px] bg-black">
          <div className="absolute left-0 top-[381px] w-[16px] h-[60px] bg-[#555555] rounded-r-[3px] flex items-center justify-center [clip-path:polygon(0_0,100%_12%,100%_88%,0_100%)]">
            <svg width="6" height="10" viewBox="0 0 6 10" fill="none" stroke="#999"><path d="M5 1L1 5l4 4" /></svg>
          </div>
          <Dialog />
        </div>
      </div>
      <svg width="1538" height="835" className="absolute inset-0 pointer-events-none">
        {arrows.map((a, i) => <polygon key={i} points={arrowPoints(a)} fill="#fb1d13" />)}
      </svg>
    </div>
  );
}
